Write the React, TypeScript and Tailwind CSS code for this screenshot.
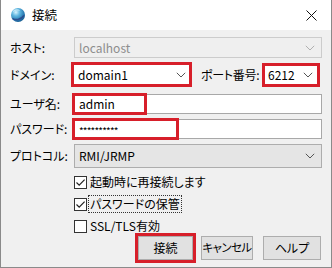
import React from "react";

function Chevron({ color = "#555" }: { color?: string }) {
  return (
    <svg width="10" height="6" viewBox="0 0 10 6" className="block">
      <path d="M0.8 0.8 L5 5 L9.2 0.8" fill="none" stroke={color} strokeWidth="1" />
    </svg>
  );
}

function Check() {
  return (
    <svg width="11" height="11" viewBox="0 0 11 11" className="block">
      <path d="M1.5 5.5 L4.2 8.2 L9.6 2.6" fill="none" stroke="#222" strokeWidth="1.2" />
    </svg>
  );
}

function Globe() {
  return (
    <svg width="16" height="16" viewBox="0 0 16 16" className="block">
      <defs>
        <radialGradient id="g" cx="0.35" cy="0.3" r="0.8">
          <stop offset="0" stopColor="#d8f4ff" />
          <stop offset="0.35" stopColor="#5fb6e0" />
          <stop offset="0.8" stopColor="#1f6fa8" />
          <stop offset="1" stopColor="#15507e" />
        </radialGradient>
      </defs>
      <circle cx="8" cy="8" r="7" fill="url(#g)" />
      <path d="M2.5 11.5 C5 13.5 11 13 14 8.5" fill="none" stroke="#2d4f8f" strokeWidth="1.6" />
      <path d="M3 4.5 C5 2.5 8 2.5 9.5 3.5" fill="none" stroke="#e9fbff" strokeWidth="0.8" opacity="0.8" />
    </svg>
  );
}

export default function App() {
  return (
    <div
      className="w-[332px] h-[268px] bg-[#f0f0f0] border-x border-b border-[#8a8a8a] overflow-hidden text-[12px] text-black leading-none whitespace-nowrap [font-feature-settings:'palt']"
      style={{ fontFamily: '"Noto Sans CJK JP", sans-serif' }}
    >
      {/* title bar */}
      <div className="h-[30px] bg-white flex items-center pl-[9px] pr-[14px]">
        <Globe />
        <span className="ml-[6px] text-[12.5px]">接続</span>
        <div className="ml-auto">
          <svg width="11" height="11" viewBox="0 0 11 11" className="block">
            <path d="M0.5 0.5 L10.5 10.5 M10.5 0.5 L0.5 10.5" stroke="#111" strokeWidth="1" />
          </svg>
        </div>
      </div>

      {/* host */}
      <div className="flex items-center h-[21px] mt-[7px]">
        <div className="w-[73px] pl-[9px]">ホスト:</div>
        <div className="w-[248px] h-[21px] border border-[#cccccc] bg-[#efefef] flex items-center pl-[4px] pr-[6px] text-[#8d8d8d]">
          <span>localhost</span>
          <span className="ml-auto"><Chevron color="#b0b0b0" /></span>
        </div>
      </div>

      {/* domain + port */}
      <div className="flex items-center h-[25px] mt-[4px]">
        <div className="w-[70px] pl-[9px]">ドメイン:</div>
        <div className="w-[121px] h-[25px] border-[3px] border-[#d71f2a] bg-white flex items-center pl-[4px] pr-[3px]">
          <span>domain1</span>
          <span className="ml-auto"><Chevron /></span>
        </div>
        <div className="ml-[9px] w-[61px] tracking-[-0.3px]">ポート番号:</div>
        <div className="w-[58px] h-[24px] border-[3px] border-[#d71f2a] bg-white flex items-center pl-[3px] pr-[4px]">
          <span>6212</span>
          <span className="ml-auto"><Chevron /></span>
        </div>
      </div>

      {/* user */}
      <div className="flex items-center h-[22px] mt-[6px]">
        <div className="w-[73px] pl-[9px]">ユーザ名:</div>
        <div className="relative w-[248px] h-[20px] border border-[#a8a8a8] bg-white flex items-center pl-[4px]">
          <span>admin</span>
          <div className="absolute left-[-3px] top-[-2px] w-[75px] h-[22px] border-[3px] border-[#d71f2a]" />
        </div>
      </div>

      {/* password */}
      <div className="flex items-center h-[22px] mt-[3px]">
        <div className="w-[73px] pl-[9px]">パスワード:</div>
        <div className="relative w-[248px] h-[20px] border border-[#a8a8a8] bg-white flex items-center pl-[4px]">
          <span className="text-[10px] tracking-[-0.8px] mt-[3px]">**********</span>
          <div className="absolute left-[-3px] top-[-2px] w-[107px] h-[22px] border-[3px] border-[#d71f2a]" />
        </div>
      </div>

      {/* protocol */}
      <div className="flex items-center h-[24px] mt-[4px]">
        <div className="w-[73px] pl-[9px]">プロトコル:</div>
        <div className="w-[248px] h-[24px] border border-[#adadad] bg-[#e5e5e5] flex items-center pl-[4px] pr-[6px]">
          <span>RMI/JRMP</span>
          <span className="ml-auto"><Chevron /></span>
        </div>
      </div>

      {/* checkboxes */}
      <div className="pl-[73px] mt-[4px] flex flex-col gap-[2px]">
        <div className="h-[20px] flex items-center">
          <div className="w-[13px] h-[13px] border border-[#333] bg-white flex items-center justify-center">
            <Check />
          </div>
          <span className="ml-[3px]">起動時に再接続します</span>
        </div>
        <div className="h-[20px] flex items-center">
          <div className="w-[13px] h-[13px] border border-[#333] bg-white flex items-center justify-center">
            <Check />
          </div>
          <span className="ml-[1px] px-[1px] py-[2px] border border-dotted border-[#333]">パスワードの保管</span>
        </div>
        <div className="h-[20px] flex items-center">
          <div className="w-[13px] h-[13px] border border-[#333] bg-white" />
          <span className="ml-[3px]">SSL/TLS有効</span>
        </div>
      </div>

      {/* buttons */}
      <div className="flex justify-end pr-[10px] mt-[0px]">
        <div className="w-[55px] h-[24px] bg-[#e1e1e1] border border-[#adadad] flex items-center justify-center outline-[3px] outline-solid outline-[#d71f2a]">
          接続
        </div>
        <div className="ml-[8px] w-[52px] h-[24px] bg-[#e1e1e1] border border-[#adadad] flex items-center justify-center text-[11.5px] tracking-[-0.6px]">
          キャンセル
        </div>
        <div className="ml-[10px] w-[58px] h-[24px] bg-[#e1e1e1] border border-[#adadad] flex items-center justify-center">
          ヘルプ
        </div>
      </div>
    </div>
  );
}
